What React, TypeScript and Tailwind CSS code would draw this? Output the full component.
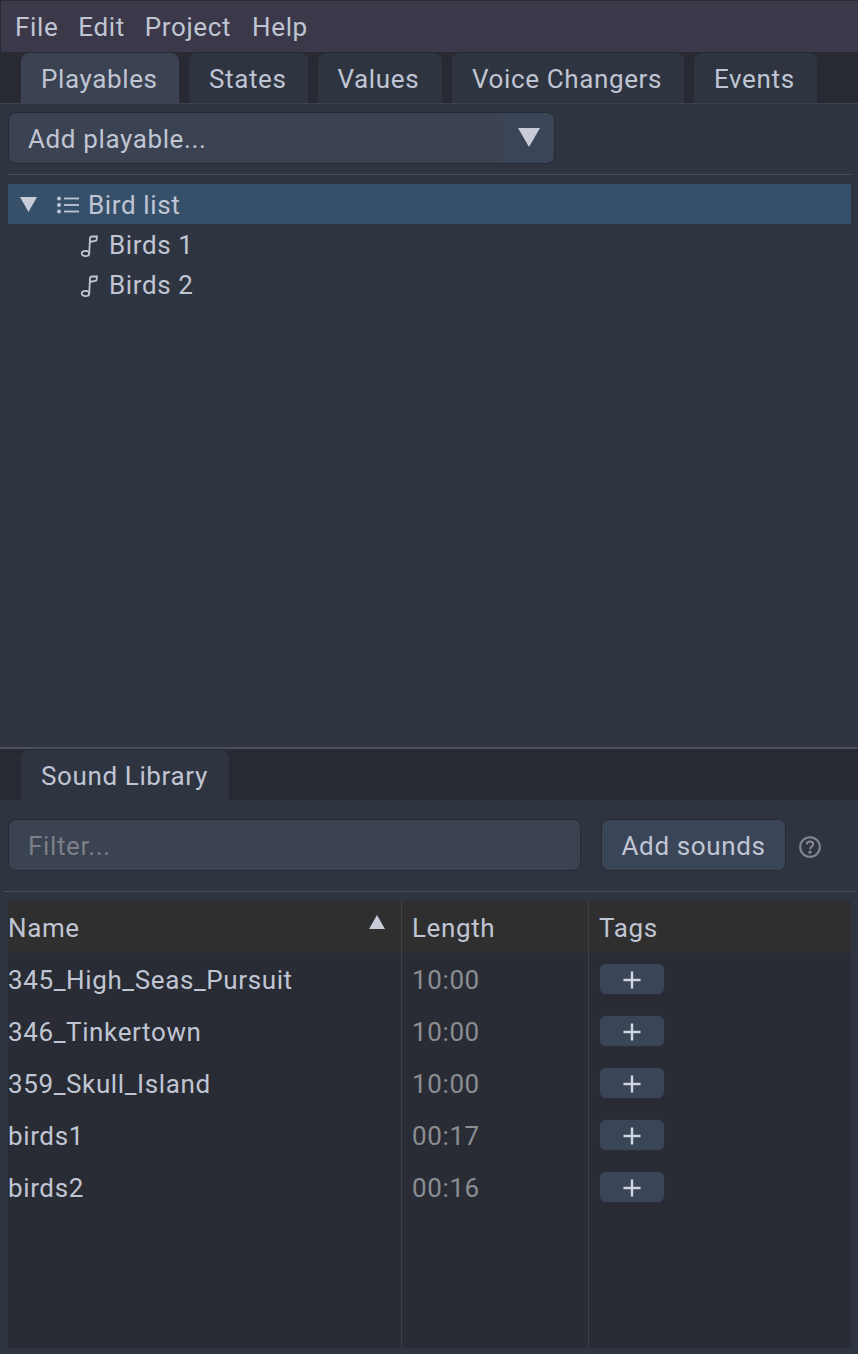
const tabs = [
  { label: 'Playables', width: 'w-[158px]' },
  { label: 'States', width: 'w-[118.5px]' },
  { label: 'Values', width: 'w-[124.5px]' },
  { label: 'Voice Changers', width: 'w-[232px]' },
  { label: 'Events', width: 'w-[123px]' },
];

const sounds = [
  { name: '345_High_Seas_Pursuit', length: '10:00' },
  { name: '346_Tinkertown', length: '10:00' },
  { name: '359_Skull_Island', length: '10:00' },
  { name: 'birds1', length: '00:17' },
  { name: 'birds2', length: '00:16' },
];

function NoteIcon() {
  return (
    <svg width="20" height="24" viewBox="0 0 20 24" fill="none" stroke="#c0c5d3" strokeWidth="1.8">
      <ellipse cx="6.5" cy="20.5" rx="3.8" ry="2.6" />
      <path d="M10.2 20.5 L11 5.5 C11.1 4.2 12 3.5 13.2 3.5 L18 3.5 L17.4 7.6 L10.8 9" />
    </svg>
  );
}

function ListIcon() {
  return (
    <svg width="24" height="20" viewBox="0 0 24 20" fill="#c0c5d3">
      <circle cx="3" cy="3.5" r="2" />
      <circle cx="3" cy="10" r="2" />
      <circle cx="3" cy="16.5" r="2" />
      <rect x="8" y="2.6" width="15" height="1.8" />
      <rect x="8" y="9.1" width="15" height="1.8" />
      <rect x="8" y="15.6" width="15" height="1.8" />
    </svg>
  );
}

export default function App() {
  return (
    <div className="w-[858px] h-[1354px] flex flex-col overflow-hidden bg-[#2e3440] text-[26px] leading-[30px] tracking-[0.62px] text-[#c0c5d3] font-['Roboto',sans-serif]">
      {/* Menu bar */}
      <div className="h-[52px] shrink-0 flex items-center gap-[20px] pl-[14px] bg-[#3a3849] border-t border-l border-[#282a33]">
        <span>File</span>
        <span>Edit</span>
        <span>Project</span>
        <span className="ml-[1px]">Help</span>
      </div>

      {/* Main tabs */}
      <div className="h-[52px] shrink-0 flex items-end gap-[10px] pl-[21px] bg-[#282a33] border-b border-[#3b4252]">
        {tabs.map((tab, i) => (
          <div
            key={tab.label}
            className={`${tab.width} h-[50px] pl-[20px] pt-[2px] flex items-center rounded-t-[8px] ${i === 0 ? 'bg-[#3b4252]' : 'bg-[#2e3440]'}`}
          >
            {tab.label}
          </div>
        ))}
      </div>

      {/* Playables panel */}
      <div className="h-[643px] shrink-0 flex flex-col px-[8px]">
        <div className="mt-[8px] w-[547px] h-[52px] flex rounded-[8px] border border-[#282a33] bg-[#3b4252] overflow-hidden">
          <div className="flex-1 flex items-center pl-[19px] pt-[1px]">Add playable...</div>
          <div className="w-[52px] flex items-center justify-center pl-[2px] bg-[#3b4558]">
            <svg width="22" height="20" viewBox="0 0 22 20" fill="#c8ccd9">
              <path d="M0 0 H22 L11 19 Z" />
            </svg>
          </div>
        </div>
        <div className="mt-[10px] mr-[-1px] h-[1px] bg-[#4a4f5c]" />

        <div className="mt-[9px] mr-[-1px] flex flex-col">
          <div className="h-[40px] flex items-center bg-[#36506a] pt-[1px]">
            <svg className="ml-[12px]" width="17" height="15" viewBox="0 0 17 15" fill="#c8ccd9">
              <path d="M0 0 H17 L8.5 15 Z" />
            </svg>
            <span className="ml-[19px]"><ListIcon /></span>
            <span className="ml-[8px]">Bird list</span>
          </div>
          <div className="h-[40px] flex items-center pl-[71px] gap-[10px] pt-[1px]">
            <NoteIcon />
            <span>Birds 1</span>
          </div>
          <div className="h-[40px] flex items-center pl-[71px] gap-[10px] pt-[1px]">
            <NoteIcon />
            <span>Birds 2</span>
          </div>
        </div>
      </div>

      {/* Splitter */}
      <div className="h-[2px] shrink-0 bg-[#4a4f5c]" />

      {/* Library tabs */}
      <div className="h-[51px] shrink-0 flex items-end pl-[21px] bg-[#282a33]">
        <div className="h-[50px] pl-[20px] pr-[21px] pt-[2px] flex items-center rounded-t-[8px] bg-[#2e3440]">Sound Library</div>
      </div>

      {/* Library panel */}
      <div className="flex-1 flex flex-col">
        <div className="mt-[19px] pl-[8px] flex items-center">
          <div className="w-[573px] h-[52px] flex items-center pl-[19px] pt-[1px] rounded-[8px] border border-[#282a33] bg-[#3b4252] text-[#7c7f87]">
            Filter...
          </div>
          <div className="ml-[20px] w-[185px] h-[52px] flex items-center justify-center pt-[1px] rounded-[8px] border border-[#282a33] bg-[#3b4558]">
            Add sounds
          </div>
          <svg className="ml-[13px] mt-[3px]" width="22" height="22" viewBox="0 0 22 22" fill="none" stroke="#85888f" strokeWidth="2">
            <circle cx="11" cy="11" r="9.8" />
            <path d="M7.8 8.6 C7.8 6.5 9.3 5.6 11 5.6 C13 5.6 14.2 6.8 14.2 8.3 C14.2 10.6 11 10.6 11 13.2" />
            <circle cx="11" cy="16.2" r="0.7" fill="#85888f" />
          </svg>
        </div>
        <div className="mt-[20px] ml-[4px] w-[851px] h-[1px] bg-[#4a4f5c]" />

        {/* Sound table */}
        <div className="mt-[9px] ml-[8px] w-[843px] h-[447px] flex flex-col bg-[#292c34] overflow-hidden">
          <div className="h-[52px] shrink-0 grid grid-cols-[394px_187px_1fr] bg-[#2f2f30]">
            <div className="relative flex items-center border-r border-[#3f3f42] pt-[2px]">
              Name
              <svg className="absolute right-[16px] top-[14px]" width="16" height="14" viewBox="0 0 16 14" fill="#c8ccd9">
                <path d="M8 0 L16 14 H0 Z" />
              </svg>
            </div>
            <div className="flex items-center pl-[10px] border-r border-[#3f3f42] pt-[2px]">Length</div>
            <div className="flex items-center pl-[10px] pt-[2px]">Tags</div>
          </div>
          <div className="flex-1 grid grid-cols-[394px_187px_1fr]">
            <div className="border-r border-[#3f3f42] flex flex-col">
              {sounds.map((s) => (
                <div key={s.name} className="h-[52px] flex items-center pt-[1px]">{s.name}</div>
              ))}
            </div>
            <div className="border-r border-[#3f3f42] flex flex-col">
              {sounds.map((s) => (
                <div key={s.name} className="h-[52px] flex items-center pl-[10px] pt-[1px] text-[#8b8d92]">{s.length}</div>
              ))}
            </div>
            <div className="flex flex-col">
              {sounds.map((s) => (
                <div key={s.name} className="h-[52px] flex items-center pl-[11px]">
                  <div className="w-[66px] h-[32px] -ml-[1px] pt-[1px] flex items-center justify-center rounded-[7px] border border-[#2b2e38] bg-[#3b4558]">
                    <svg width="18" height="18" viewBox="0 0 18 18" fill="#d3d6e2">
                      <rect x="7.8" y="0.5" width="2.4" height="17" />
                      <rect x="0.5" y="7.8" width="17" height="2.4" />
                    </svg>
                  </div>
                </div>
              ))}
            </div>
          </div>
        </div>
      </div>
    </div>
  );
}
